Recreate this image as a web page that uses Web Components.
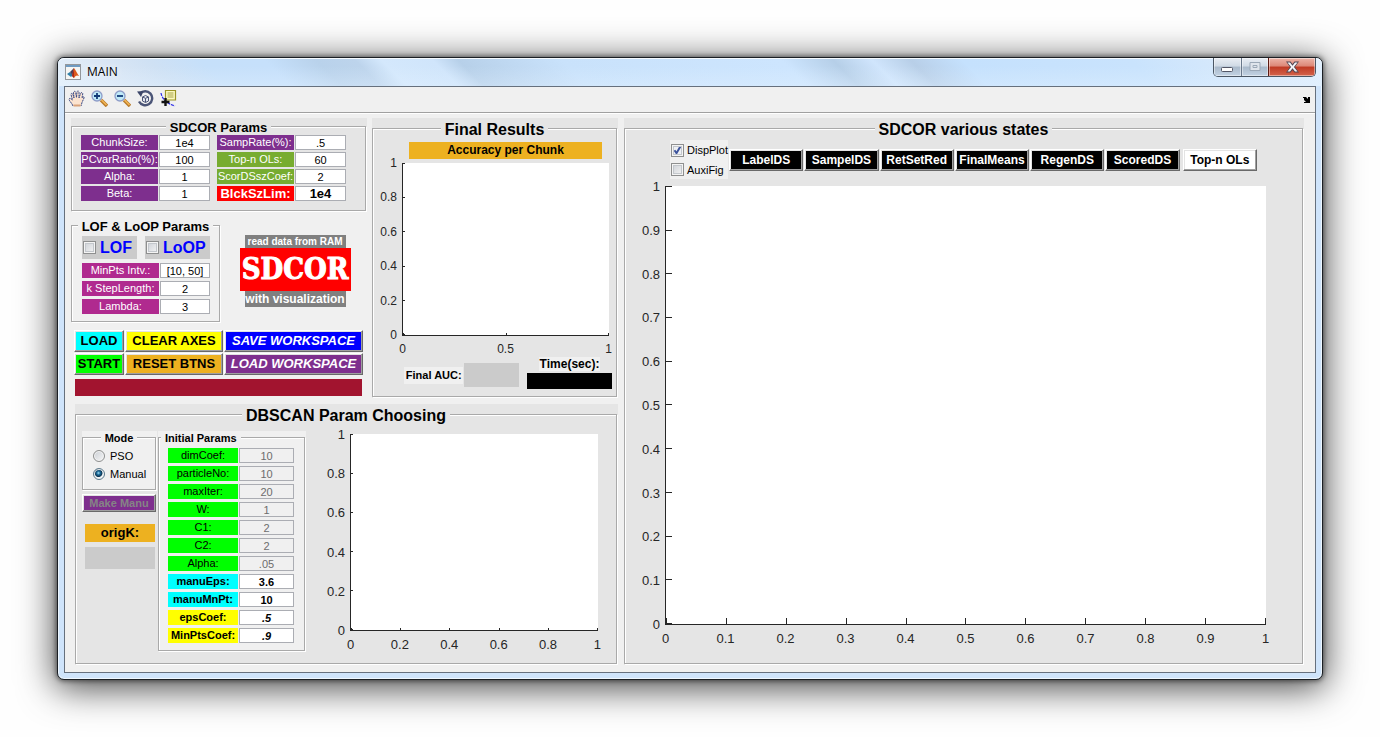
<!DOCTYPE html>
<html lang="en">
<head>
<meta charset="utf-8">
<title>MAIN</title>
<style>
html { background: #fefefe; }
body { margin: 0; font: 11px "Liberation Sans", Arial, sans-serif; color: #000; }
</style>
</head>
<body>
<main-figure></main-figure>
<script>
const define = (name, build, after) => customElements.define(name, class extends HTMLElement {
  connectedCallback() {
    if (this.shadowRoot) return;
    this.attachShadow({ mode: 'open' }).innerHTML = build(this);
    if (after) after(this);
  }
});
const at = (el, name, fallback = '') => el.hasAttribute(name) ? el.getAttribute(name) : fallback;

/* Etched group box with a legend */
define('etched-panel', el => `
<style>
  :host { display: flex; flex-direction: column; background: var(--panel, #e5e5e5); min-width: 0; box-sizing: border-box; }
  fieldset { flex: 1; display: flex; flex-direction: column; min-width: 0; margin: 0 1px 1px 0; padding: 0; box-sizing: border-box;
    border: 1px solid #a9a9a9; box-shadow: 1px 1px 0 #fff, inset 1px 1px 0 #fff; }
  legend { font: bold ${at(el, 'size', 13)}px/${at(el, 'line', 15)}px "Liberation Sans", Arial, sans-serif; padding: ${at(el, 'drop', 2)}px 4px 0; white-space: nowrap;
    background: var(--panel, #e5e5e5); ${at(el, 'align') === 'left' ? 'margin: 0 auto 0 2px' : 'margin: 0 auto'}; }
  ::slotted(*) { flex: 1; }
</style>
<fieldset><legend>${at(el, 'caption')}</legend><slot></slot></fieldset>`);

/* Coloured caption with its edit box */
define('param-row', el => `
<style>
  :host { display: grid; grid-template-columns: minmax(0, var(--label, 77fr)) minmax(0, var(--field, 51fr)); gap: 1px; height: 15px;
    font-size: ${at(el, 'size', 11)}px; font-weight: ${at(el, 'weight', 'normal')}; }
  label { background: ${at(el, 'fill')}; color: ${at(el, 'ink', '#fff')}; text-align: center; line-height: 15px; white-space: nowrap; overflow: hidden; }
  input { box-sizing: border-box; width: 100%; height: 15px; margin: 0; padding: 0; border: 1px solid #abadb3; border-radius: 0; background: #fff;
    text-align: center; color: #000; font: inherit; font-style: ${at(el, 'slant', 'normal')}; }
  input:disabled { background: #f0f0f0; color: #6d6d6d; }
</style>
<label for="field">${at(el, 'label')}</label>
<input id="field" type="text" value="${at(el, 'value')}"${el.hasAttribute('disabled') ? ' disabled' : ''}>`);

/* Bevelled push button */
define('push-button', el => `
<style>
  :host { display: block; min-width: 0; height: 22px; }
  button { display: block; width: 100%; height: 100%; margin: 0; padding: 0; box-sizing: border-box; border: 1px solid; border-color: #fff #696969 #696969 #fff;
    border-radius: 0; box-shadow: inset -1px -1px 0 #a0a0a0, inset 1px 1px 0 #e3e3e3; background: ${at(el, 'fill')}; color: ${at(el, 'ink', '#000')};
    font: ${at(el, 'slant', 'normal')} bold ${at(el, 'size', 13)}px/16px "Liberation Sans", Arial, sans-serif; white-space: nowrap; overflow: hidden; }
</style>
<button type="button"${el.hasAttribute('disabled') ? ' disabled' : ''}><slot></slot></button>`);

/* Tick box or radio with its label */
define('choice-box', el => `
<style>
  :host { display: block; min-width: 0; background: var(--back, transparent); }
  label { display: flex; align-items: center; height: 100%; gap: var(--space, 3px); padding-left: 1px; white-space: nowrap; }
  input { appearance: none; flex: none; box-sizing: border-box; width: 13px; height: 13px; margin: 0; border: 1px solid #8e8f8f;
    background: linear-gradient(135deg, #cbcfd5, #f6f6f6); box-shadow: inset 0 0 0 1px #f4f4f4, inset 0 0 0 2px #c3c7cc; }
  input[type=checkbox]:checked { background: url('data:image/svg+xml,<svg xmlns="http://www.w3.org/2000/svg" viewBox="0 0 11 11"><path d="M2.5 5.2l2 3 4-7" fill="none" stroke="%233c539c" stroke-width="2"/></svg>') center / 11px 11px no-repeat, #eef0f4; }
  input[type=radio] { border-radius: 50%; width: 12px; height: 12px; box-shadow: inset 0 0 0 1px #f4f4f4; }
  input[type=radio]:checked { border-color: #5d7a8c; background: radial-gradient(circle at 45% 40%, #9fe0f8 0, #1c6a98 22%, #0d3350 44%, #eef3f6 54%); }
</style>
<label><input type="${at(el, 'kind', 'checkbox')}" name="choice"${el.hasAttribute('checked') ? ' checked' : ''}><span><slot></slot></span></label>`);

/* Empty plot axes with ticks */
define('plot-axes', el => {
  const range = n => Array.from({ length: n + 1 }, (_, i) => String(+(i / n).toFixed(1)));
  const xs = range(+at(el, 'x')), ys = range(+at(el, 'y')).reverse();
  const tick = at(el, 'tick', 2);
  return `
<style>
  :host { display: grid; grid-template-columns: ${at(el, 'gutter')}px minmax(0, 1fr); grid-template-rows: minmax(0, 1fr) 21px; min-height: 0;
    font-size: ${at(el, 'size', 13)}px; color: #262626; }
  .y, .x, .tx, .ty { display: flex; justify-content: space-between; }
  .y, .ty { flex-direction: column; }
  .y { align-items: flex-end; padding-right: 5px; }
  .y span { height: 1px; display: flex; align-items: center; line-height: 15px; }
  .x { grid-column: 2; align-items: center; padding-top: 5px; }
  .x span { width: 1px; display: flex; justify-content: center; line-height: 15px; }
  .plot { display: grid; grid-template: "a" 1fr / 1fr; background: #fff; border: solid #262626; border-width: 0 0 1px 1px; }
  .tx, .ty { grid-area: a; }
  .tx { align-items: flex-end; }
  .tx i { width: 1px; height: ${tick}px; background: #262626; }
  .ty i { height: 1px; width: ${tick}px; background: #262626; }
</style>
<div class="y">${ys.map(v => `<span>${v}</span>`).join('')}</div>
<div class="plot"><div class="ty">${ys.map(() => '<i></i>').join('')}</div><div class="tx">${xs.map(() => '<i></i>').join('')}</div></div>
<div class="x">${xs.map(v => `<span>${v}</span>`).join('')}</div>`;
});

/* Glass title bar with caption buttons */
define('title-bar', () => `
<style>
  :host { display: flex; align-items: flex-start; height: 28px; padding: 0 6px; border-radius: 6px 6px 0 0; box-shadow: inset 0 1px 0 #f6fbff;
    background: linear-gradient(#fff0 30%, #e2f1ff60),
    linear-gradient(45deg, #e6f1fb 0, #dbe7f5 5%, #cfe1f4 9%, #c6e0fa 13%, #c6e0fb 18%, #b9d2eb 22%, #bdd4ec 25%, #d4e8fc 27%, #d0e5fb 31%, #b7d0e9 33%, #c9e2fb 41%, #cde5fe 58%, #b6cfe8 62%, #d0e5fc 65%, #b8cfe8 68%, #c5e1fd 72%, #c9e3fd 85%, #dcebfb 95%, #e3f1ff); }
  .icon { margin: 6px 6px 0 1px; }
  h1 { margin: 0; font: 12px/27px "Open Sans", "Noto Sans", sans-serif; flex: 1; text-shadow: 0 0 6px #fff; }
  nav { display: flex; height: 19px; border: 1px solid #4b5765; border-top: 0; border-radius: 0 0 5px 5px; overflow: hidden; box-sizing: border-box; }
  button { display: grid; place-items: center; margin: 0; padding: 0; border: 0; border-radius: 0; width: 27px; box-shadow: inset 0 0 0 1px #ffffff70;
    background: linear-gradient(#e9eef4, #d0dae5 45%, #a9b9ca 50%, #c3d3e4); }
  button + button { border-left: 1px solid #68778a; }
  .close { width: 47px; background: linear-gradient(#edb5a9, #dc8777 45%, #bf3a24 50%, #d4644c); border-color: #5d1a12; }
</style>
<svg class="icon" width="16" height="16" viewBox="0 0 16 16" aria-hidden="true">
  <rect x=".5" y=".5" width="15" height="15" fill="#f6f6f4" stroke="#93979c"/><path d="M1 1h14v2H1z" fill="#6f9bc2"/>
  <path d="M2 10l3-2 3 3-2 2z" fill="#2f7fa8"/><path d="M5 8l4-4-1 8z" fill="#4b3f58"/><path d="M9 4c2 3 3 5 5 8-2-1-3-1-5 2l-2-2z" fill="#dc5a1c"/><path d="M9 4c-.5 3-1 5-2 8l2 2z" fill="#a5261c"/>
</svg>
<h1>MAIN</h1>
<nav aria-label="Window">
  <button type="button" aria-label="Minimize"><svg width="13" height="17" viewBox="0 0 13 17"><rect x=".5" y="8.500" width="11" height="4" rx="1" fill="#fff" stroke="#535666"/></svg></button>
  <button type="button" aria-label="Maximize" disabled><svg width="13" height="12" viewBox="0 0 13 12"><path d="M1 1.500h10v8H1zM4 4.500h4v2H4z" fill="#dfe5ec" stroke="#9ba8b7"/></svg></button>
  <button type="button" class="close" aria-label="Close"><svg width="13" height="12" viewBox="0 0 13 12"><path d="M0 .5h4.500L6.500 3l2-2.500H13L9 6l4 5.500H8.500L6.500 9l-2 2.500H0L4 6z" fill="#4e4552"/><path d="M1.500 1.500H4l2.500 3.200L9 1.500h2.500L7.900 6l3.600 4.500H9L6.500 7.300 4 10.500H1.500L5.100 6z" fill="#f4f4f6"/></svg></button>
</nav>`);

/* Figure toolbar */
define('tool-bar', () => `
<style>
  :host { display: flex; align-items: center; height: 25px; padding: 0 5px 0 3px; border-bottom: 1px solid #a0a0a0; box-shadow: 0 1px 0 #fff; background: #f0f0f0; gap: 6px; }
  button { margin: 0 0 3px; padding: 0; border: 0; background: none; width: 17px; height: 17px; }
  svg { display: block; }
  .dock { margin: 0 0 0 auto; width: 7px; height: 6px; }
</style>
<button type="button" aria-label="Pan"><svg width="17" height="17" viewBox="0 0 17 17"><path d="M5 16C4 13 1 11 1 9c1-1.500 2.500 0 3.500 1L3 4.500C3 3 4.500 3 5 4.500L6 8 5.500 2.500c0-1.500 2-1.500 2.200 0L8.500 7.500 9 2c.2-1.500 2-1.200 2 .2L11 8l1.500-4.500C13 2 15 2.500 14.700 4L14 8c1-2 2.500-1.500 2 0l-2 4.500L13 16" fill="#fbe3cf" stroke="#3a4a86" stroke-dasharray="2 .6"/><path d="M5.500 15.500h7" stroke="#d9a27a" stroke-width="2"/></svg></button>
<button type="button" aria-label="Zoom in"><svg width="17" height="17" viewBox="0 0 17 17"><path d="M10 10l6 6" stroke="#b87a2a" stroke-width="3.500"/><path d="M10.500 10l5 5" stroke="#f2b656" stroke-width="1.600"/><circle cx="6" cy="6" r="5" fill="#bfe9f7" stroke="#8f9dc8" stroke-width="1.300"/><path d="M6 3v6M3 6h6" stroke="#123a78" stroke-width="1.800"/></svg></button>
<button type="button" aria-label="Zoom out"><svg width="17" height="17" viewBox="0 0 17 17"><path d="M10 10l6 6" stroke="#b87a2a" stroke-width="3.500"/><path d="M10.500 10l5 5" stroke="#f2b656" stroke-width="1.600"/><circle cx="6" cy="6" r="5" fill="#bfe9f7" stroke="#8f9dc8" stroke-width="1.300"/><path d="M3 6h6" stroke="#123a78" stroke-width="1.800"/></svg></button>
<button type="button" aria-label="Rotate 3D"><svg width="17" height="17" viewBox="0 0 17 17"><path d="M3 3.500A7 7 0 1 1 2 11.500" fill="none" stroke="#4b5577" stroke-width="2.400"/><path d="M0 1.500l6.500-.5L4 7z" fill="#3c4668"/><path d="M5.500 7l3-1.500 3 1.500v4l-3 1.500-3-1.500zM5.500 7l3 1.300 3-1.300M8.500 8.300v4" fill="#e4e8f0" stroke="#4b5577"/></svg></button>
<button type="button" aria-label="Data cursor"><svg width="17" height="17" viewBox="0 0 17 17"><path d="M1 3c1 5 4 10 14 13" fill="none" stroke="#2020e8" stroke-width="1.200" stroke-dasharray="3 1"/><path d="M5.500.5h10v9.500h-10z" fill="#fbf9bf" stroke="#9a9428" stroke-width="1.200"/><path d="M7.500 3h6M7.500 5h6M7.500 7h6" stroke="#a7a24c"/><path d="M5.500 8v8M1.500 12h8" stroke="#111" stroke-width="2.400"/></svg></button>
<button type="button" class="dock" aria-label="Dock"><svg width="7" height="6" viewBox="0 0 7 6"><path d="M0 1V0h3l2 2V0h2v6H1V5h2L1 3V1z"/></svg></button>`);

/* Program name plate */
define('name-plate', () => `
<style>
  :host { display: flex; flex-direction: column; align-items: center; color: #fff; font-weight: bold; text-align: center; white-space: nowrap; }
  p { margin: 0; width: 101px; background: #808080; }
  .top { font-size: 10px; line-height: 13px; }
  .low { font-size: 12px; line-height: 16px; }
  h2 { margin: 0; width: 111px; background: #f00; font: bold 29px/43px "DejaVu Serif Condensed", "DejaVu Serif", serif; -webkit-text-stroke: 1px #fff; }
</style>
<p class="top">read data from RAM</p><h2>SDCOR</h2><p class="low">with visualization</p>`);

define('sdcor-params', () => `
<style>
  :host { display: block; }
  .cols { display: grid; grid-template-columns: 1fr 1fr; gap: 7px; padding: 0 19px 9px 9px; }
  .cols div { display: grid; gap: 2px; }
</style>
<etched-panel caption="SDCOR Params"><div class="cols">
  <div>
    <param-row label="ChunkSize:" value="1e4" fill="#7e2f8e"></param-row>
    <param-row label="PCvarRatio(%):" value="100" fill="#7e2f8e"></param-row>
    <param-row label="Alpha:" value="1" fill="#7e2f8e"></param-row>
    <param-row label="Beta:" value="1" fill="#7e2f8e"></param-row>
  </div>
  <div>
    <param-row label="SampRate(%):" value=".5" fill="#7e2f8e"></param-row>
    <param-row label="Top-n OLs:" value="60" fill="#77ac30"></param-row>
    <param-row label="ScorDSszCoef:" value="2" fill="#77ac30"></param-row>
    <param-row label="BlckSzLim:" value="1e4" fill="#f00" size="13" weight="bold"></param-row>
  </div>
</div></etched-panel>`);

define('lof-params', () => `
<style>
  :host { display: block; --panel: #f0f0f0; }
  .body { padding: 3px 9px 7px 10px; }
  .checks { display: grid; grid-template-columns: 55fr 65fr; gap: 8px; height: 23px; margin-bottom: 4px; --back: #cbcbcb; --space: 4px; font-size: 16px; font-weight: bold; color: #00f; }
  .rows { display: grid; gap: 3px; --label: 77fr; --field: 50fr; }
</style>
<etched-panel caption="LOF &amp; LoOP Params" line="13"><div class="body">
  <div class="checks"><choice-box>LOF</choice-box><choice-box>LoOP</choice-box></div>
  <div class="rows">
    <param-row label="MinPts Intv.:" value="[10, 50]" fill="#b02a8f"></param-row>
    <param-row label="k StepLength:" value="2" fill="#b02a8f"></param-row>
    <param-row label="Lambda:" value="3" fill="#b02a8f"></param-row>
  </div>
</div></etched-panel>`);

define('command-pad', () => `
<style>
  :host { display: block; padding: 0 4px 0 3px; }
  .grid { display: grid; grid-template-columns: 50fr 98fr 139fr; gap: 1px; }
  .bar { height: 17px; margin: 4px 1px 0; background: #a2142f; }
</style>
<div class="grid">
  <push-button fill="#0ff">LOAD</push-button><push-button fill="#ff0">CLEAR AXES</push-button><push-button fill="#00f" ink="#fff" slant="italic">SAVE WORKSPACE</push-button>
  <push-button fill="#0f0">START</push-button><push-button fill="#edb120">RESET BTNS</push-button><push-button fill="#7e2f8e" ink="#fff" slant="italic">LOAD WORKSPACE</push-button>
</div>
<div class="bar"></div>`);

define('final-results', () => `
<style>
  :host { display: grid; }
  .body { display: flex; flex-direction: column; padding: 4px 0 7px; font-weight: bold; }
  h3 { margin: 0 14px 4px 36px; font-size: 12px; line-height: 17px; background: #edb120; text-align: center; }
  plot-axes { flex: 1; margin-right: 7px; font-weight: normal; }
  .foot { display: flex; margin: 0 4px 0 31px; gap: 8px; height: 32px; }
  .auc { flex: 115; display: flex; align-items: center; gap: 1px; padding-top: 4px; }
  .auc span { flex: 60; background: #f0f0f0; line-height: 17px; text-align: center; white-space: nowrap; }
  .auc output { flex: 55; height: 24px; background: #cbcbcb; }
  .time { flex: 85; display: flex; flex-direction: column; align-items: center; gap: 2px; }
  .time span { background: #f0f0f0; font-size: 12px; line-height: 14px; padding: 0 1px; }
  .time output { width: 100%; height: 16px; background: #000; }
</style>
<etched-panel caption="Final Results" size="16" line="17" drop="3"><div class="body">
  <h3>Accuracy per Chunk</h3>
  <plot-axes x="2" y="5" gutter="29" size="12"></plot-axes>
  <div class="foot">
    <div class="auc"><span>Final AUC:</span><output></output></div>
    <div class="time"><span>Time(sec):</span><output></output></div>
  </div>
</div></etched-panel>`);

define('dbscan-panel', el => {
  const rows = [['dimCoef:', '10'], ['particleNo:', '10'], ['maxIter:', '20'], ['W:', '1'], ['C1:', '2'], ['C2:', '2'], ['Alpha:', '.05']]
    .map(([l, v]) => `<param-row label="${l}" value="${v}" fill="#0f0" ink="#000" disabled></param-row>`).join('');
  return `
<style>
  :host { display: grid; }
  .body { display: grid; grid-template-columns: 75px 148px minmax(0, 1fr); column-gap: 1px; padding: 7px 18px 11px 6px; }
  .side { display: flex; flex-direction: column; }
  etched-panel { --panel: #f0f0f0; }
  .outer { --panel: #e5e5e5; }
  .modes { padding: 3px 0 6px 9px; display: grid; grid-auto-rows: 18px; --space: 5px; }
  push-button { height: 18px; margin: 3px 1px 0 0; }
  .orig { margin: 12px 2px 5px 3px; font-size: 13px; font-weight: bold; line-height: 18px; background: #edb120; text-align: center; }
  output { height: 22px; margin: 0 2px 0 3px; background: #cbcbcb; }
  .rows { display: grid; gap: 3px; padding: 4px 10px 7px 9px; --label: 70fr; --field: 55fr; }
  plot-axes { padding-top: 3px; }
</style>
<etched-panel class="outer" caption="DBSCAN Param Choosing" size="16" line="17" drop="3"><div class="body">
  <div class="side">
    <etched-panel caption="Mode" size="11" line="11"><div class="modes">
      <choice-box kind="radio">PSO</choice-box><choice-box kind="radio" checked>Manual</choice-box>
    </div></etched-panel>
    <push-button fill="#7e2f8e" ink="#858585" size="11" disabled>Make Manu</push-button>
    <div class="orig">origK:</div><output></output>
  </div>
  <etched-panel caption="Initial Params" size="11" line="11" align="left"><div class="rows">${rows}
    <param-row label="manuEps:" value="3.6" fill="#0ff" ink="#000" weight="bold"></param-row>
    <param-row label="manuMnPt:" value="10" fill="#0ff" ink="#000" weight="bold"></param-row>
    <param-row label="epsCoef:" value=".5" fill="#ff0" ink="#000" weight="bold" slant="italic"></param-row>
    <param-row label="MinPtsCoef:" value=".9" fill="#ff0" ink="#000" weight="bold" slant="italic"></param-row>
  </div></etched-panel>
  <plot-axes x="5" y="5" gutter="43"></plot-axes>
</div></etched-panel>`;
});

define('states-panel', () => `
<style>
  :host { display: grid; }
  .body { display: flex; flex-direction: column; padding: 2px 0 17px; }
  .bar { display: flex; gap: 1px; padding: 0 45px; margin-bottom: 7px; }
  .checks { flex: 58; display: grid; grid-template-rows: 20px 19px; --back: #f0f0f0; }
  .buttons { flex: 528; display: flex; gap: 1px; padding-top: 9px; }
  push-button { flex: 1; }
  .last { margin-left: 2px; }
  plot-axes { flex: 1; margin-right: 36px; }
</style>
<etched-panel caption="SDCOR various states" size="16" line="17" drop="3"><div class="body">
  <div class="bar">
    <div class="checks"><choice-box checked>DispPlot</choice-box><choice-box>AuxiFig</choice-box></div>
    <div class="buttons">${['LabelDS', 'SampelDS', 'RetSetRed', 'FinalMeans', 'RegenDS', 'ScoredDS'].map(t => `<push-button fill="#000" ink="#fff" size="12">${t}</push-button>`).join('')}<push-button class="last" fill="#fff" size="12">Top-n OLs</push-button></div>
  </div>
  <plot-axes x="10" y="10" gutter="40" tick="6"></plot-axes>
</div></etched-panel>`);

define('main-figure', () => `
<style>
  :host { display: grid; box-sizing: border-box; min-height: 100vh; padding: 57px; }
  .window { display: flex; flex-direction: column; border: 1px solid #1b1f24; border-radius: 7px; background: #cfe4fb;
    box-shadow: inset 0 0 0 1px #eef7ff, 0 0 5px 1px #00000080, 0 6px 36px 2px #000000b8; }
  .client { flex: 1; display: flex; flex-direction: column; margin: 0 6px 6px; border: 1px solid #66707d; background: #f0f0f0; }
  .content { flex: 1; display: grid; grid-template-columns: minmax(0, 547fr) minmax(0, 680fr); gap: 6px; padding: 5px 11px 7px 6px; }
  .left { display: grid; grid-template-rows: auto 1fr; gap: 6px; }
  .upper { display: grid; grid-template-columns: minmax(0, 296fr) minmax(0, 246fr); gap: 5px; }
  .mid { display: grid; grid-template-columns: minmax(0, 150fr) minmax(0, 146fr); align-items: center; margin: 6px 0 7px; }
  name-plate { padding-left: 2px; }
  .inputs { padding-bottom: 2px; }
  dbscan-panel { margin-left: 4px; }
</style>
<div class="window">
  <title-bar></title-bar>
  <div class="client">
    <tool-bar></tool-bar>
    <main class="content">
      <div class="left">
        <div class="upper">
          <div class="inputs">
            <sdcor-params></sdcor-params>
            <div class="mid"><lof-params></lof-params><name-plate></name-plate></div>
            <command-pad></command-pad>
          </div>
          <final-results></final-results>
        </div>
        <dbscan-panel></dbscan-panel>
      </div>
      <states-panel></states-panel>
    </main>
  </div>
</div>`);
</script>
</body>
</html>
